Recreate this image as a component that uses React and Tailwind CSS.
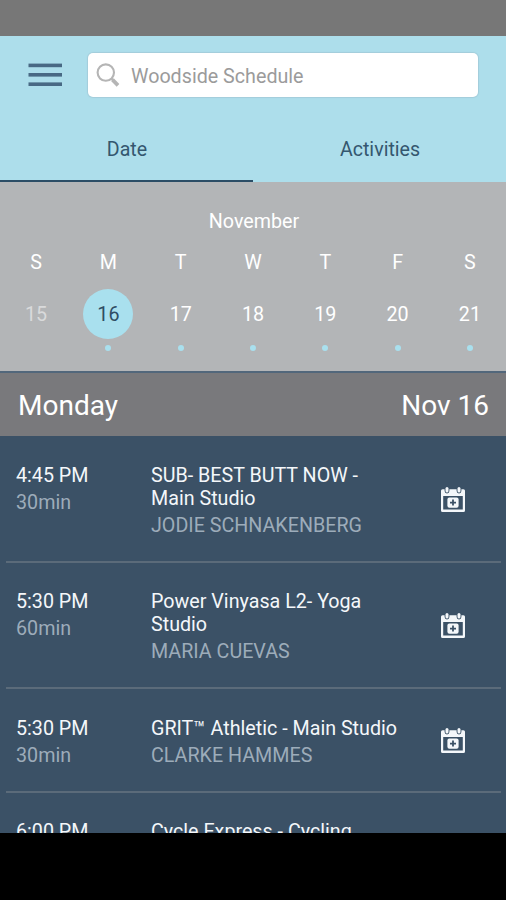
const days = [
  { letter: "S", date: 15, past: true },
  { letter: "M", date: 16, selected: true },
  { letter: "T", date: 17 },
  { letter: "W", date: 18 },
  { letter: "T", date: 19 },
  { letter: "F", date: 20 },
  { letter: "S", date: 21 },
]

const classes = [
  { time: "4:45 PM", duration: "30min", title: "SUB- BEST BUTT NOW - Main Studio", instructor: "JODIE SCHNAKENBERG" },
  { time: "5:30 PM", duration: "60min", title: "Power Vinyasa L2- Yoga Studio", instructor: "MARIA CUEVAS" },
  { time: "5:30 PM", duration: "30min", title: "GRIT™ Athletic - Main Studio", instructor: "CLARKE HAMMES" },
]

function MenuIcon() {
  return (
    <svg className="w-[34px] h-6" viewBox="0 0 34 24" fill="#486984">
      <rect x="0.5" y="0.6" width="34" height="3.6" />
      <rect x="0.5" y="10" width="34" height="3.6" />
      <rect x="0.5" y="19.4" width="34" height="3.6" />
    </svg>
  )
}

function SearchIcon() {
  return (
    <svg className="w-6 h-6" viewBox="0 0 24 24" fill="none" stroke="#b5b5b5">
      <circle cx="9.8" cy="9.6" r="8.2" strokeWidth="2.1" />
      <path d="M15.5 15.5L18 18" strokeWidth="2" />
      <path d="M16.4 16.7L22 22.3" strokeWidth="3.8" />
    </svg>
  )
}

function CalendarAddIcon() {
  return (
    <svg className="w-6 h-[25px] shrink-0" viewBox="0 0 24 25">
      <path
        fill="#f4f7fa"
        fillRule="evenodd"
        d="M1.5 2.2H22.5Q24 2.2 24 3.7V23.5Q24 25 22.5 25H1.5Q0 25 0 23.5V3.7Q0 2.2 1.5 2.2ZM2.2 9V22.4H21.8V9Z"
      />
      <rect x="3.6" y="-1" width="4.8" height="7.4" rx="2.4" fill="#3b5166" />
      <rect x="15.6" y="-1" width="4.8" height="7.4" rx="2.4" fill="#3b5166" />
      <rect x="4.5" y="0" width="3" height="5.6" rx="1.5" fill="#f4f7fa" />
      <rect x="16.5" y="0" width="3" height="5.6" rx="1.5" fill="#f4f7fa" />
      <rect x="6.4" y="10.4" width="11.2" height="10.4" rx="2" fill="#f4f7fa" />
      <path d="M12 12.6V18.6M9 15.6H15" stroke="#3b5166" strokeWidth="1.8" />
    </svg>
  )
}

function ClassRow({ item }) {
  return (
    <div className="mr-[5px] ml-1.5 flex shrink-0 border-b-2 border-[#5b6b7a] pt-[27.6px] pb-6 pl-2.5 pr-9 text-[19.7px] leading-[23px]">
      <div className="w-[135px] shrink-0">
        <p className="text-[#f4f7fa]">{item.time}</p>
        <p className="mt-1 text-[#9dacba]">{item.duration}</p>
      </div>
      <div className="w-[250px]">
        <p className="text-[#f4f7fa]">{item.title}</p>
        <p className="mt-1 text-[#9dacba]">{item.instructor}</p>
      </div>
      <div className="ml-auto flex items-center pb-0.5">
        <CalendarAddIcon />
      </div>
    </div>
  )
}

export default function App() {
  return (
    <main className="flex h-[900px] w-[506px] flex-col overflow-hidden bg-black font-[Roboto,sans-serif]">
      {/* Status bar */}
      <div className="h-[35.5px] shrink-0 bg-[#777777]" />

      {/* Search and tabs */}
      <header className="flex h-[146.5px] shrink-0 flex-col bg-[#addeeb]">
        <div className="flex items-center pt-[17.5px] pl-7 pr-7">
          <MenuIcon />
          <div className="ml-[26px] flex h-11 flex-1 items-center rounded-[5px] bg-white pl-2 shadow-[0_0_1px_1px_#a3cddb]">
            <SearchIcon />
            <span className="ml-[11px] pt-[3px] text-[19.7px] text-[#9b9b9b]">Woodside Schedule</span>
          </div>
        </div>
        <nav className="flex flex-1 text-[19.6px] text-[#34576f]">
          <div className="flex flex-1 items-center justify-center border-b-2 border-[#2b4d66] pt-[23px] pl-px">Date</div>
          <div className="flex flex-1 items-center justify-center border-b-2 border-transparent pt-[23px] pl-px">Activities</div>
        </nav>
      </header>

      {/* Week picker */}
      <section className="h-[189px] shrink-0 bg-[#b3b5b7] pt-7 text-[19.7px] leading-[23px] text-white">
        <h2 className="pl-0.5 text-center">November</h2>
        <div className="flex justify-center">
          {days.map((day) => (
            <div key={day.date} className="flex w-[72.3px] shrink-0 flex-col items-center pt-[18px]">
              <span>{day.letter}</span>
              <span
                className={
                  day.selected
                    ? "mt-[15px] flex size-[50px] items-center justify-center rounded-full bg-[#a9e0ee] text-[#2f4d64]"
                    : day.past
                      ? "mt-[15px] flex size-[50px] items-center justify-center text-[#d9dadb]"
                      : "mt-[15px] flex size-[50px] items-center justify-center"
                }
              >
                {day.date}
              </span>
              {!day.past && <span className="mt-[6px] size-1.5 rounded-full bg-[#a9e0ee]" />}
            </div>
          ))}
        </div>
      </section>

      {/* Selected day */}
      <div className="flex h-[65px] shrink-0 items-center justify-between border-t-2 border-[#52677b] bg-[#79797c] pl-[18px] pr-[17px] pt-[3px] text-[28px] text-white">
        <span>Monday</span>
        <span>Nov 16</span>
      </div>

      {/* Class list */}
      <section className="flex h-[397px] shrink-0 flex-col overflow-hidden bg-[#3b5166]">
        {classes.map((item, index) => (
          <ClassRow key={index} item={item} />
        ))}
        {/* Next class, only partly scrolled into view */}
        <div className="flex shrink-0 pt-[27.6px] pl-4 text-[19.7px] leading-[23px] text-[#f4f7fa]">
          <p className="w-[135px]">6:00 PM</p>
          <p>Cycle Express - Cycling</p>
        </div>
      </section>
    </main>
  )
}
